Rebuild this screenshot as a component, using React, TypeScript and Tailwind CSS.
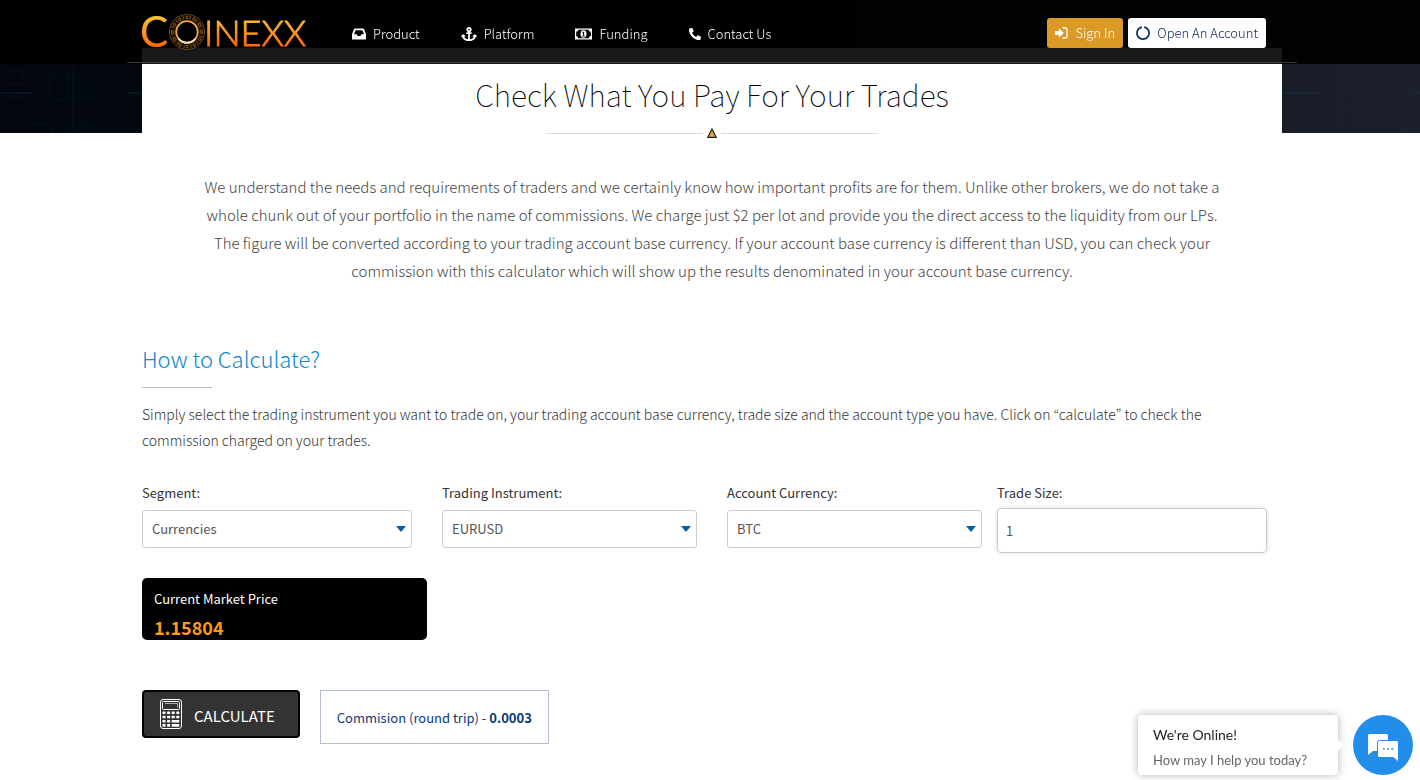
import type { ReactNode } from "react";
import { FaAnchor, FaPhone } from "react-icons/fa";

const NAV: { label: string; icon: ReactNode }[] = [
  { label: "Product", icon: <InboxIcon /> },
  { label: "Platform", icon: <FaAnchor className="size-4" /> },
  { label: "Funding", icon: <MoneyIcon /> },
  { label: "Contact Us", icon: <FaPhone className="size-3 -scale-x-100" /> },
];

function InboxIcon() {
  return (
    <svg viewBox="0 0 14 12" className="h-3 w-3.5" aria-hidden="true">
      <path
        fill="currentColor"
        fillRule="evenodd"
        d="M3 0.500h8a1 1 0 0 1 .9.600L14 6.300V11a.6.6 0 0 1-.6.600H.6A.6.6 0 0 1 0 11V6.300L2.100 1.100A1 1 0 0 1 3 .5zM3.600 2.200L2 6.300h2.700l.9 1.800h2.800l.9-1.800H12L10.400 2.200z"
      />
    </svg>
  );
}

function MoneyIcon() {
  return (
    <svg viewBox="0 0 17 12" className="h-3 w-[17px]" aria-hidden="true">
      <path
        fill="currentColor"
        fillRule="evenodd"
        d="M0 0.500h17v11H0zM3.200 1.700A2 2 0 0 1 1.200 3.700v4.600a2 2 0 0 1 2 2h10.600a2 2 0 0 1 2-2V3.700a2 2 0 0 1-2-2z"
      />
      <ellipse cx="8.500" cy="6" rx="3" ry="3.700" fill="currentColor" />
      <path d="M7.400 4.800l1.200-.8v3.600M7.300 8h2.600" stroke="#000" fill="none" />
    </svg>
  );
}

function Logo() {
  const studs = Array.from({ length: 12 }, (_, i) => (i * Math.PI) / 6);
  return (
    <svg viewBox="-4 -8 176 56" className="-ml-1 h-14 w-44 overflow-visible" role="img" aria-label="Coinexx">
      <defs>
        <linearGradient id="gold" gradientUnits="userSpaceOnUse" x1="0" y1="4" x2="0" y2="36">
          <stop offset="0" stopColor="#fdc431" />
          <stop offset="0.5" stopColor="#fb9a1c" />
          <stop offset="1" stopColor="#ff6200" />
        </linearGradient>
      </defs>
      <g fill="url(#gold)" stroke="url(#gold)" fontFamily="Lato, sans-serif">
        <text x="-2" y="35" fontSize="42" strokeWidth="0.2">
          C
        </text>
        <text x="62" y="34" fontSize="36" fontWeight="300" strokeWidth="0.9">
          INEXX
        </text>
      </g>
      <circle cx="45" cy="20" r="17.500" fill="#0a0703" stroke="#6b4512" strokeWidth="1" />
      <circle cx="45" cy="20" r="14.500" fill="none" stroke="#4a2f0c" strokeWidth="4" strokeDasharray="2 1.500" />
      {studs.map((a) => (
        <circle
          key={a}
          cx={45 + 14.5 * Math.cos(a)}
          cy={20 + 14.5 * Math.sin(a)}
          r="1.200"
          fill="#0a0703"
          stroke="#a8731d"
          strokeWidth="0.700"
        />
      ))}
      <circle cx="45" cy="20" r="10.800" fill="#000" stroke="#f0a545" strokeWidth="1.800" />
      <path d="M36.500 26.600a10.800 10.800 0 0 0 17 0" fill="none" stroke="#ffe6b0" strokeWidth="1.800" />
    </svg>
  );
}

function SignInIcon() {
  return (
    <svg viewBox="0 0 13 12" className="h-3 w-[13px]" aria-hidden="true">
      <path d="M0 4h4V1.200L8.800 6 4 10.800V8H0z" fill="currentColor" />
      <path
        d="M7.500 1h3a1.500 1.500 0 0 1 1.500 1.500v7a1.500 1.500 0 0 1-1.500 1.500h-3"
        fill="none"
        stroke="currentColor"
        strokeWidth="1.300"
      />
    </svg>
  );
}

function Header() {
  return (
    <header className="fixed inset-x-0 top-0 z-10 h-16 bg-black/90 pl-1">
      <div className="mx-auto flex h-[63px] max-w-[1170px] items-start border-b border-[#3a383a] px-[15px]">
        <a href="#home" className="mt-1">
          <Logo />
        </a>
        <nav className="mt-[22px] ml-[38px] flex gap-[41px] text-[13px] leading-6 font-light text-white">
          {NAV.map((item) => (
            <a key={item.label} href="#menu" className="flex items-center gap-[7px]">
              {item.icon}
              {item.label}
            </a>
          ))}
        </nav>
        <div className="mt-[18px] mr-4 ml-auto flex gap-[5px] text-[13px] leading-[30px] font-light">
          <a href="#signin" className="flex h-[30px] items-center gap-[7px] rounded-[3px] bg-[#db9a25] px-2 text-white">
            <SignInIcon />
            Sign In
          </a>
          <a href="#open" className="flex h-[30px] items-center gap-[7px] rounded-[3px] bg-white px-2 text-[#0b2c63]">
            <svg viewBox="0 0 14 14" className="size-3.5" aria-hidden="true">
              <path d="M8.200 1.200a6 6 0 1 1-2.400 0" fill="none" stroke="currentColor" strokeWidth="1.700" />
            </svg>
            Open An Account
          </a>
        </div>
      </div>
    </header>
  );
}

function Hero() {
  return (
    <div className="flex h-[133px] justify-between bg-linear-to-r from-[#02070f] via-[#0a1019] to-[#1b202b]">
      <svg viewBox="0 0 142 133" className="h-[133px] w-[142px]" fill="none" stroke="#0a1826" aria-hidden="true">
        <path d="M0 93h32M128 93h14" stroke="#0c2034" />
        <path d="M6 70h18v14H8v14h16M50 72v30M54 74h14v26H54M73 66v66M88 80v24M28 124h24v9M70 122h20" opacity="0.500" />
      </svg>
      <svg viewBox="0 0 138 133" className="h-[133px] w-[138px]" fill="none" stroke="#252e3c" aria-hidden="true">
        <path d="M0 93h36M132 93h6" stroke="#1d2d47" />
        <path d="M50 69h88M56 64v69M60 80h12v12H60v14h12M86 78v28M94 78h12v26H94M118 76h10v30M124 108v25" opacity="0.450" />
      </svg>
    </div>
  );
}

function Select({ id, label, options, className }: { id: string; label: string; options: string[]; className: string }) {
  return (
    <div className={className}>
      <label htmlFor={id} className="block text-[13px] leading-6 text-[#333]">
        {label}
      </label>
      <div className="relative mt-[5px]">
        <select
          id={id}
          className="block h-[38px] w-full appearance-none rounded-[3px] border border-[#ccc] bg-white px-[9px] text-[13px] leading-5 text-[#555]"
        >
          {options.map((o) => (
            <option key={o}>{o}</option>
          ))}
        </select>
        <svg viewBox="0 0 10 6" className="pointer-events-none absolute top-4 right-[6px] h-1.5 w-2.5" aria-hidden="true">
          <path d="M0 0h10L5 6z" fill="#0060a8" />
        </svg>
      </div>
    </div>
  );
}

function CalculatorIcon() {
  const keys = [0, 1, 2, 3].flatMap((r) => [0, 1, 2, 3].map((c) => ({ r, c })));
  return (
    <svg viewBox="0 0 22 30" className="h-[30px] w-[22px]" fill="none" stroke="#fff" aria-hidden="true">
      <rect x="0.500" y="0.500" width="21" height="29" rx="2.500" strokeWidth="1" />
      <rect x="2.500" y="2.500" width="17" height="8" rx="1" strokeWidth="1" />
      <path d="M5 4.500h12.500v4" strokeWidth="0.600" />
      {keys.map(({ r, c }) =>
        r > 1 && c === 3 ? null : (
          <rect
            key={`${r}${c}`}
            x={2.5 + c * 4.6}
            y={12.5 + r * 4.2}
            width={r > 1 && c === 2 ? 7.6 : 3}
            height="2.600"
            rx="0.500"
            fill="#fff"
            stroke="none"
          />
        ),
      )}
    </svg>
  );
}

function Chat() {
  return (
    <aside className="fixed right-[7px] bottom-[5px] flex items-center gap-[15px] font-['Lato',sans-serif]">
      <div className="relative h-[60px] w-[200px] rounded bg-white px-[15px] pt-2 shadow-[0_0_8px_rgba(0,0,0,0.3)]">
        <span className="absolute top-[26px] -right-1 size-2 rotate-45 bg-white" />
        <p className="text-sm leading-6 text-[#222]">We're Online!</p>
        <p className="text-[13px] leading-[26px] text-[#666]">How may I help you today?</p>
      </div>
      <button type="button" aria-label="Open chat" className="grid size-[60px] place-items-center rounded-full bg-[#238dea]">
        <svg viewBox="0 0 32 30" className="mt-1.5 h-[30px] w-8" aria-hidden="true">
          <path d="M2.500 1h17A1.500 1.500 0 0 1 21 2.500V16a2 2 0 0 1-2 2H6l-5 4V2.500A1.500 1.500 0 0 1 2.500 1z" fill="#fff" />
          <path
            d="M12.500 7.500h17a2 2 0 0 1 2 2V29l-5-4.500h-14a2 2 0 0 1-2-2v-13a2 2 0 0 1 2-2z"
            fill="#fff"
            stroke="#238dea"
          />
          <path d="M16 16h1.800M20.200 16H22M24.400 16h1.800" stroke="#238dea" strokeWidth="1.400" />
        </svg>
      </button>
    </aside>
  );
}

export default function App() {
  return (
    <div className="min-h-screen bg-white font-['Noto_Sans_CJK_KR',sans-serif]">
      <Header />
      <Hero />
      <div className="-mt-[85px] pl-1">
        <main className="mx-auto max-w-[1140px] bg-white pt-[22px]">
          <h1 className="text-center text-3xl leading-12 font-thin text-black">Check What You Pay For Your Trades</h1>
          <div className="mx-auto mt-[9px] flex h-3 w-[332px] items-center gap-1">
            <span className="h-px flex-1 bg-[#ddd]" />
            <svg viewBox="0 0 10 10" className="size-2.5" aria-hidden="true">
              <path d="M5 1L9.200 9.300H.800z" fill="#e8a32b" stroke="#222" strokeWidth="1.200" />
            </svg>
            <span className="h-px flex-1 bg-[#ddd]" />
          </div>
          <p className="mx-auto mt-[34px] max-w-[1035px] text-center text-[15px] leading-7 font-light text-[#444]">
            We understand the needs and requirements of traders and we certainly know how important profits are for them.
            Unlike other brokers, we do not take a whole chunk out of your portfolio in the name of commissions. We charge
            just $2 per lot and provide you the direct access to the liquidity from our LPs. The figure will be converted
            according to your trading account base currency. If your account base currency is different than USD, you can
            check your commission with this calculator which will show up the results denominated in your account base
            currency.
          </p>

          <h2 className="mt-[53px] text-[22px] leading-10 font-light text-[#0e86ca]">How to Calculate?</h2>
          <div className="mt-[9px] h-px w-[70px] bg-[#bbb]" />
          <p className="mt-[13px] max-w-[1110px] text-sm leading-[26px] font-light text-[#333]">
            Simply select the trading instrument you want to trade on, your trading account base currency, trade size and
            the account type you have. Click on “calculate” to check the commission charged on your trades.
          </p>

          <form onSubmit={(e) => e.preventDefault()}>
            <div className="mt-7 grid grid-cols-[300fr_285fr_270fr_285fr]">
              <Select id="segment" label="Segment:" options={["Currencies", "Metals", "Crypto"]} className="pr-[30px]" />
              <Select id="instrument" label="Trading Instrument:" options={["EURUSD", "GBPUSD"]} className="pr-[30px]" />
              <Select id="currency" label="Account Currency:" options={["BTC", "USD", "EUR"]} className="pr-[15px]" />
              <div className="pr-[15px]">
                <label htmlFor="size" className="block text-[13px] leading-6 text-[#333]">
                  Trade Size:
                </label>
                <input
                  id="size"
                  type="text"
                  defaultValue="1"
                  className="mt-[3px] block h-[45px] w-full rounded border border-[#ccc] bg-white px-2 text-[13px] leading-5 text-[#555] shadow-[0_0_5px_rgba(0,0,0,0.15)] outline-none"
                />
              </div>
            </div>

            <div className="mt-[25px] h-[62px] w-[285px] overflow-hidden rounded-[5px] bg-black px-3 pt-2">
              <p className="text-[13px] leading-[26px] text-white">Current Market Price</p>
              <p className="text-lg leading-[30px] font-bold text-[#fd9a17]">1.15804</p>
            </div>

            <div className="mt-[50px] flex items-start gap-5">
              <button
                type="submit"
                className="flex h-12 items-center gap-3 rounded border-2 border-black bg-[#333] pr-[23px] pl-4 text-[15px] leading-6 text-white"
              >
                <CalculatorIcon />
                <span className="pt-1">CALCULATE</span>
              </button>
              <output className="h-[54px] border border-[#b3bcd6] px-4 text-[13px] leading-[54px] text-[#0a3a78]">
                Commision (round trip) - <strong>0.0003</strong>
              </output>
            </div>
          </form>
        </main>
      </div>
      <Chat />
    </div>
  );
}
